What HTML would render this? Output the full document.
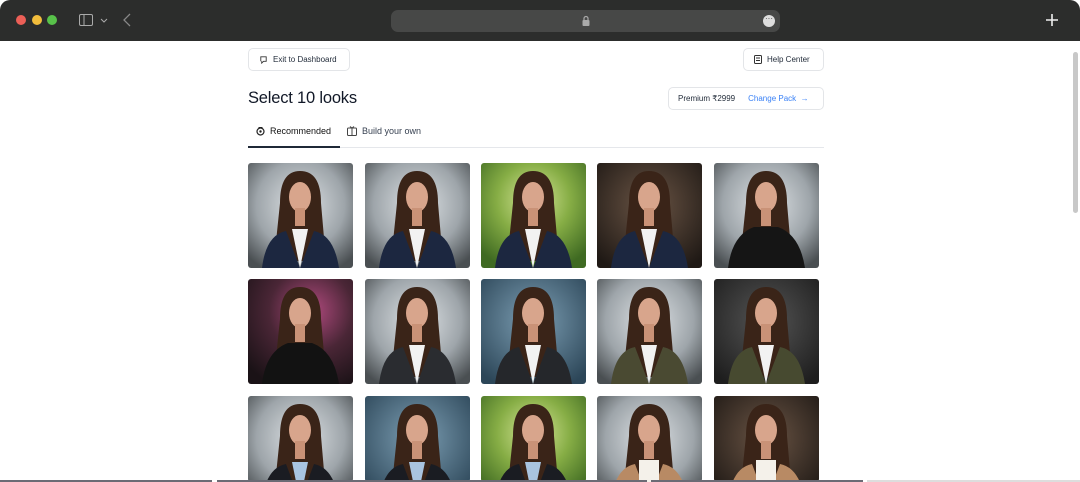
<!DOCTYPE html>
<html><head><meta charset="utf-8"><style>
*{margin:0;padding:0;box-sizing:border-box}
body{width:1080px;height:482px;overflow:hidden;background:#fff;font-family:"Liberation Sans",sans-serif;position:relative;color:#111827}
.bar{position:absolute;left:0;top:0;width:1080px;height:41px;background:#2c2d2c;border-radius:10px 10px 0 0}
.dot{position:absolute;top:15px;width:10px;height:10px;border-radius:50%}
.url{position:absolute;left:391px;top:10px;width:389px;height:22px;background:#474847;border-radius:7px}
.btn{position:absolute;height:23px;border:1px solid #e3e5e8;border-radius:5px;font-size:8.5px;display:flex;align-items:center;gap:5px;padding:0 10px;color:#1f2937;white-space:nowrap}
h1{position:absolute;left:248px;top:89px;font-size:16.5px;font-weight:400;letter-spacing:-0.2px;white-space:nowrap}
.tab{position:absolute;top:126px;font-size:9px;display:flex;align-items:center;gap:5px;white-space:nowrap}
.ph{position:absolute;width:105px;height:105px;border-radius:3px;overflow:hidden}
.ph svg{display:block}
</style></head><body>
<div class="bar">
<div class="dot" style="left:16px;background:#ec5f57"></div>
<div class="dot" style="left:32px;background:#f2bd3c"></div>
<div class="dot" style="left:47px;background:#58c24a"></div>
<svg style="position:absolute;left:79px;top:14px" width="32" height="13" viewBox="0 0 32 13"><rect x="0.5" y="0.5" width="13" height="11" rx="1.5" fill="none" stroke="#aaa" stroke-width="1"/><line x1="5" y1="1" x2="5" y2="11" stroke="#aaa"/><path d="M22 5l3 3 3-3" fill="none" stroke="#aaa" stroke-width="1"/></svg>
<svg style="position:absolute;left:122px;top:13px" width="10" height="14"><path d="M8 1L2 7l6 6" fill="none" stroke="#888" stroke-width="1.3"/></svg>
<div class="url"><svg style="position:absolute;left:191px;top:5px" width="8" height="11"><path d="M2 5V3.5a2 2 0 0 1 4 0V5" fill="none" stroke="#aaa" stroke-width="1.2"/><rect x="0.5" y="5" width="7" height="6" rx="1" fill="#aaa"/></svg>
<div style="position:absolute;left:372px;top:5px;width:12px;height:12px;border-radius:50%;background:#ddd;font-size:8px;line-height:7px;text-align:center;color:#444">···</div></div>
<svg style="position:absolute;left:1045px;top:13px" width="14" height="14"><path d="M7 1v12M1 7h12" stroke="#eee" stroke-width="1.6"/></svg>
</div>
<div style="position:absolute;left:1073px;top:52px;width:5px;height:161px;background:#c8c8c8;border-radius:3px"></div>
<div class="btn" style="left:248px;top:48px;width:102px;padding-left:10px;font-size:8px">
<svg width="9" height="9" viewBox="0 0 10 10"><path d="M2 7V2h6v5H5L3 9V7" fill="none" stroke="#333" stroke-width="1"/></svg>Exit to Dashboard</div>
<div class="btn" style="left:743px;top:48px;width:81px;font-size:8px">
<svg width="8" height="9" viewBox="0 0 8 9"><rect x="0.5" y="0.5" width="7" height="8" rx="1" fill="none" stroke="#333"/><path d="M2 3h4M2 5.5h4" stroke="#333"/></svg>Help Center</div>
<h1>Select 10 looks</h1>
<div class="btn" style="left:668px;top:87px;width:156px;height:23px;font-size:8px;padding-left:9px">Premium ₹2999<span style="color:#3b82f6;margin-left:8px">Change Pack&nbsp; →</span></div>
<div class="tab" style="left:256px;color:#111"><svg width="9" height="10"><circle cx="4.5" cy="5.5" r="3.5" fill="none" stroke="#222" stroke-width="1.2"/><circle cx="4.5" cy="5.5" r="1.2" fill="#222"/><path d="M2.5 1.5h4" stroke="#222"/></svg>Recommended</div>
<div class="tab" style="left:347px;color:#374151"><svg width="10" height="10"><rect x="0.5" y="2" width="9" height="7.5" rx="1" fill="none" stroke="#444"/><path d="M5 2v7.5M3 0.5l2 1.5 2-1.5" fill="none" stroke="#444"/></svg>Build your own</div>
<div style="position:absolute;left:248px;top:147px;width:576px;height:1px;background:#e5e7eb"></div>
<div style="position:absolute;left:248px;top:146px;width:92px;height:2px;background:#1f2937"></div>

<svg width="0" height="0" style="position:absolute">
<defs>
<radialGradient id="office" cx="50%" cy="40%" r="70%"><stop offset="0" stop-color="#dfe3e6"/><stop offset="0.6" stop-color="#9ea5aa"/><stop offset="1" stop-color="#4a4f52"/></radialGradient>
<radialGradient id="green" cx="50%" cy="35%" r="70%"><stop offset="0" stop-color="#d8e79a"/><stop offset="0.5" stop-color="#86ad45"/><stop offset="1" stop-color="#3f6a22"/></radialGradient>
<radialGradient id="books" cx="50%" cy="40%" r="70%"><stop offset="0" stop-color="#6b5545"/><stop offset="1" stop-color="#1f1915"/></radialGradient>
<radialGradient id="blue" cx="50%" cy="40%" r="70%"><stop offset="0" stop-color="#7d9fb4"/><stop offset="1" stop-color="#2c4658"/></radialGradient>
<radialGradient id="mag" cx="60%" cy="30%" r="80%"><stop offset="0" stop-color="#b04a7e"/><stop offset="0.5" stop-color="#4a2636"/><stop offset="1" stop-color="#1a1216"/></radialGradient>
<radialGradient id="grey" cx="50%" cy="40%" r="70%"><stop offset="0" stop-color="#555"/><stop offset="1" stop-color="#1e1e1e"/></radialGradient>
<g id="p">
<path d="M32 40 Q32 8 52 8 Q73 8 73 40 L78 98 L26 98 Z" fill="#3a2418"/>
</g>
</defs></svg>

<div class="ph" style="left:248px;top:163px"><svg width="105" height="105"><rect width="105" height="105" fill="url(#office)"/><use href="#p"/><ellipse cx="52" cy="34" rx="11" ry="15" fill="#d8a58c"/><rect x="47" y="45" width="10" height="18" fill="#c99277"/><path d="M14 105 Q18 72 38 68 L52 105 L66 68 Q86 72 91 105Z" fill="#1c2740"/><path d="M44 66 L52 105 L60 66Z" fill="#f2f2f2"/></svg></div>
<div class="ph" style="left:365px;top:163px"><svg width="105" height="105"><rect width="105" height="105" fill="url(#office)"/><use href="#p"/><ellipse cx="52" cy="34" rx="11" ry="15" fill="#d8a58c"/><rect x="47" y="45" width="10" height="18" fill="#c99277"/><path d="M14 105 Q18 72 38 68 L52 105 L66 68 Q86 72 91 105Z" fill="#1c2740"/><path d="M44 66 L52 105 L60 66Z" fill="#f2f2f2"/></svg></div>
<div class="ph" style="left:481px;top:163px"><svg width="105" height="105"><rect width="105" height="105" fill="url(#green)"/><use href="#p"/><ellipse cx="52" cy="34" rx="11" ry="15" fill="#d8a58c"/><rect x="47" y="45" width="10" height="18" fill="#c99277"/><path d="M14 105 Q18 72 38 68 L52 105 L66 68 Q86 72 91 105Z" fill="#1c2740"/><path d="M44 66 L52 105 L60 66Z" fill="#f2f2f2"/></svg></div>
<div class="ph" style="left:597px;top:163px"><svg width="105" height="105"><rect width="105" height="105" fill="url(#books)"/><use href="#p"/><ellipse cx="52" cy="34" rx="11" ry="15" fill="#d8a58c"/><rect x="47" y="45" width="10" height="18" fill="#c99277"/><path d="M14 105 Q18 72 38 68 L52 105 L66 68 Q86 72 91 105Z" fill="#1c2740"/><path d="M44 66 L52 105 L60 66Z" fill="#f2f2f2"/></svg></div>
<div class="ph" style="left:714px;top:163px"><svg width="105" height="105"><rect width="105" height="105" fill="url(#office)"/><use href="#p"/><ellipse cx="52" cy="34" rx="11" ry="15" fill="#d8a58c"/><rect x="47" y="45" width="10" height="18" fill="#c99277"/><path d="M14 105 Q18 72 40 64 L64 64 Q86 72 91 105Z" fill="#151515"/></svg></div>

<div class="ph" style="left:248px;top:279px"><svg width="105" height="105"><rect width="105" height="105" fill="url(#mag)"/><use href="#p"/><ellipse cx="52" cy="34" rx="11" ry="15" fill="#d8a58c"/><rect x="47" y="45" width="10" height="18" fill="#c99277"/><path d="M14 105 Q18 72 40 64 L64 64 Q86 72 91 105Z" fill="#121212"/></svg></div>
<div class="ph" style="left:365px;top:279px"><svg width="105" height="105"><rect width="105" height="105" fill="url(#office)"/><use href="#p"/><ellipse cx="52" cy="34" rx="11" ry="15" fill="#d8a58c"/><rect x="47" y="45" width="10" height="18" fill="#c99277"/><path d="M14 105 Q18 72 38 68 L52 105 L66 68 Q86 72 91 105Z" fill="#2a2c30"/><path d="M44 66 L52 105 L60 66Z" fill="#f2f2f2"/></svg></div>
<div class="ph" style="left:481px;top:279px"><svg width="105" height="105"><rect width="105" height="105" fill="url(#blue)"/><use href="#p"/><ellipse cx="52" cy="34" rx="11" ry="15" fill="#d8a58c"/><rect x="47" y="45" width="10" height="18" fill="#c99277"/><path d="M14 105 Q18 72 38 68 L52 105 L66 68 Q86 72 91 105Z" fill="#25272b"/><path d="M44 66 L52 105 L60 66Z" fill="#f2f2f2"/></svg></div>
<div class="ph" style="left:597px;top:279px"><svg width="105" height="105"><rect width="105" height="105" fill="url(#office)"/><use href="#p"/><ellipse cx="52" cy="34" rx="11" ry="15" fill="#d8a58c"/><rect x="47" y="45" width="10" height="18" fill="#c99277"/><path d="M14 105 Q18 72 38 68 L52 105 L66 68 Q86 72 91 105Z" fill="#4a4a32"/><path d="M44 66 L52 105 L60 66Z" fill="#f2f2f2"/></svg></div>
<div class="ph" style="left:714px;top:279px"><svg width="105" height="105"><rect width="105" height="105" fill="url(#grey)"/><use href="#p"/><ellipse cx="52" cy="34" rx="11" ry="15" fill="#d8a58c"/><rect x="47" y="45" width="10" height="18" fill="#c99277"/><path d="M14 105 Q18 72 38 68 L52 105 L66 68 Q86 72 91 105Z" fill="#474a30"/><path d="M44 66 L52 105 L60 66Z" fill="#f2f2f2"/></svg></div>

<div class="ph" style="left:248px;top:396px;height:86px"><svg width="105" height="105"><rect width="105" height="105" fill="url(#office)"/><use href="#p"/><ellipse cx="52" cy="34" rx="11" ry="15" fill="#d8a58c"/><rect x="47" y="45" width="10" height="18" fill="#c99277"/><path d="M14 105 Q18 72 38 68 L52 105 L66 68 Q86 72 91 105Z" fill="#1a1c22"/><path d="M44 66 L52 105 L60 66Z" fill="#a9c4e0"/></svg></div>
<div class="ph" style="left:365px;top:396px;height:86px"><svg width="105" height="105"><rect width="105" height="105" fill="url(#blue)"/><use href="#p"/><ellipse cx="52" cy="34" rx="11" ry="15" fill="#d8a58c"/><rect x="47" y="45" width="10" height="18" fill="#c99277"/><path d="M14 105 Q18 72 38 68 L52 105 L66 68 Q86 72 91 105Z" fill="#1a1c22"/><path d="M44 66 L52 105 L60 66Z" fill="#a9c4e0"/></svg></div>
<div class="ph" style="left:481px;top:396px;height:86px"><svg width="105" height="105"><rect width="105" height="105" fill="url(#green)"/><use href="#p"/><ellipse cx="52" cy="34" rx="11" ry="15" fill="#d8a58c"/><rect x="47" y="45" width="10" height="18" fill="#c99277"/><path d="M14 105 Q18 72 38 68 L52 105 L66 68 Q86 72 91 105Z" fill="#1a1c22"/><path d="M44 66 L52 105 L60 66Z" fill="#a9c4e0"/></svg></div>
<div class="ph" style="left:597px;top:396px;height:86px"><svg width="105" height="105"><rect width="105" height="105" fill="url(#office)"/><use href="#p"/><ellipse cx="52" cy="34" rx="11" ry="15" fill="#d8a58c"/><rect x="47" y="45" width="10" height="18" fill="#c99277"/><path d="M14 105 Q18 72 38 68 L52 105 L66 68 Q86 72 91 105Z" fill="#b88a64"/><path d="M42 64 L62 64 L62 105 L42 105Z" fill="#f4f1ea"/></svg></div>
<div class="ph" style="left:714px;top:396px;height:86px"><svg width="105" height="105"><rect width="105" height="105" fill="url(#books)"/><use href="#p"/><ellipse cx="52" cy="34" rx="11" ry="15" fill="#d8a58c"/><rect x="47" y="45" width="10" height="18" fill="#c99277"/><path d="M14 105 Q18 72 38 68 L52 105 L66 68 Q86 72 91 105Z" fill="#b88a64"/><path d="M42 64 L62 64 L62 105 L42 105Z" fill="#f4f1ea"/></svg></div>

<div style="position:absolute;left:0;top:480px;width:212px;height:2px;background:#6b6b75"></div>
<div style="position:absolute;left:217px;top:480px;width:430px;height:2px;background:#6b6b75"></div>
<div style="position:absolute;left:651px;top:480px;width:212px;height:2px;background:#6b6b75"></div>
<div style="position:absolute;left:867px;top:480px;width:213px;height:2px;background:#ddd"></div>
</body></html>
